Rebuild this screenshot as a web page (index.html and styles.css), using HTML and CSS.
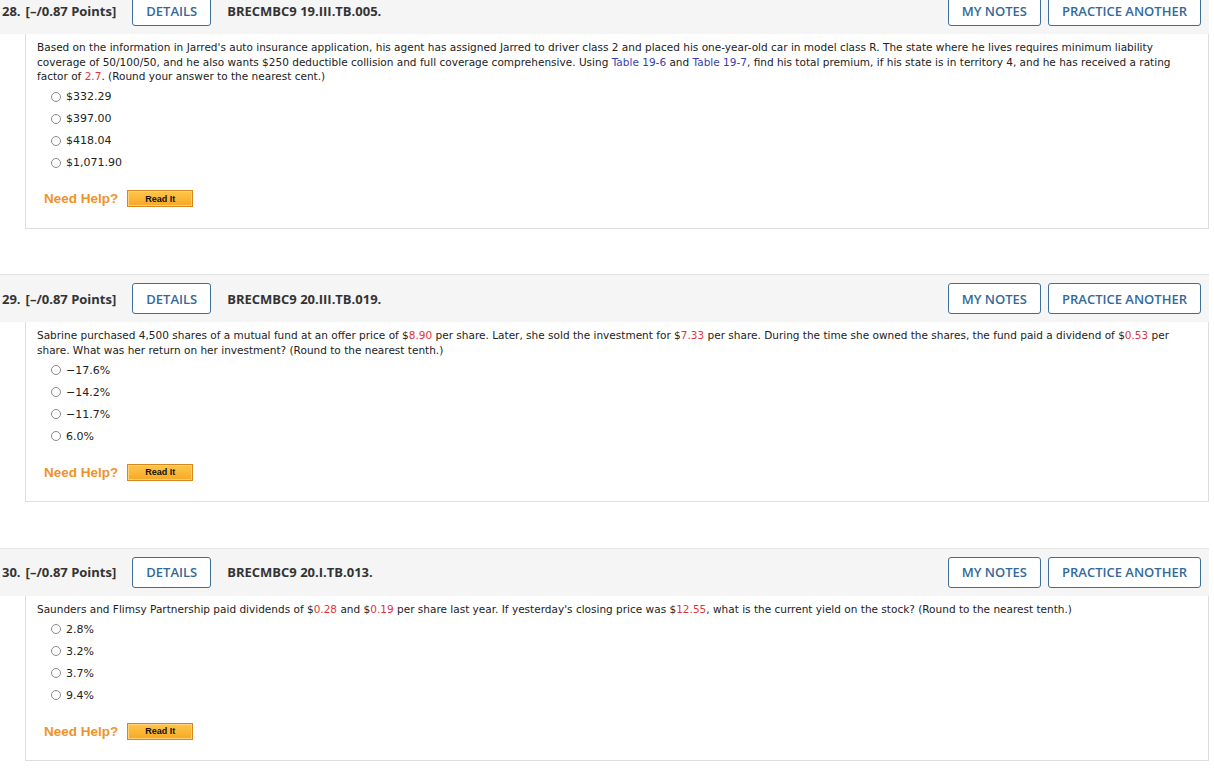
FILE: index.html
```html
<!DOCTYPE html>
<html lang="en">
<head>
<meta charset="utf-8">
<title>Questions</title>
<link rel="stylesheet" href="styles.css">
</head>
<body>
<div class="page">

  <section class="q">
    <div class="qhead">
      <span class="qnum">28.</span>
      <span class="pts">[–/0.87 Points]</span>
      <button class="btn details">DETAILS</button>
      <span class="code">BRECMBC9 19.III.TB.005.</span>
      <span class="spacer"></span>
      <button class="btn">MY NOTES</button>
      <button class="btn">PRACTICE ANOTHER</button>
    </div>
    <div class="qbody">
      <p class="stem">Based on the information in Jarred's auto insurance application, his agent has assigned Jarred to driver class 2 and placed his one-year-old car in model class R. The state where he lives requires minimum liability coverage of 50/100/50, and he also wants $250 deductible collision and full coverage comprehensive. Using <a class="link">Table 19-6</a> and <a class="link">Table 19-7</a>, find his total premium, if his state is in territory 4, and he has received a rating factor of <span class="red">2.7</span>. (Round your answer to the nearest cent.)</p>
      <ul class="opts">
        <li><span class="radio"></span>$332.29</li>
        <li><span class="radio"></span>$397.00</li>
        <li><span class="radio"></span>$418.04</li>
        <li><span class="radio"></span>$1,071.90</li>
      </ul>
      <div class="help"><span class="need">Need Help?</span><span class="readit">Read It</span></div>
    </div>
  </section>

  <section class="q">
    <div class="qhead">
      <span class="qnum">29.</span>
      <span class="pts">[–/0.87 Points]</span>
      <button class="btn details">DETAILS</button>
      <span class="code">BRECMBC9 20.III.TB.019.</span>
      <span class="spacer"></span>
      <button class="btn">MY NOTES</button>
      <button class="btn">PRACTICE ANOTHER</button>
    </div>
    <div class="qbody">
      <p class="stem">Sabrine purchased 4,500 shares of a mutual fund at an offer price of $<span class="red">8.90</span> per share. Later, she sold the investment for $<span class="red">7.33</span> per share. During the time she owned the shares, the fund paid a dividend of $<span class="red">0.53</span> per share. What was her return on her investment? (Round to the nearest tenth.)</p>
      <ul class="opts">
        <li><span class="radio"></span>−17.6%</li>
        <li><span class="radio"></span>−14.2%</li>
        <li><span class="radio"></span>−11.7%</li>
        <li><span class="radio"></span>6.0%</li>
      </ul>
      <div class="help"><span class="need">Need Help?</span><span class="readit">Read It</span></div>
    </div>
  </section>

  <section class="q">
    <div class="qhead">
      <span class="qnum">30.</span>
      <span class="pts">[–/0.87 Points]</span>
      <button class="btn details">DETAILS</button>
      <span class="code">BRECMBC9 20.I.TB.013.</span>
      <span class="spacer"></span>
      <button class="btn">MY NOTES</button>
      <button class="btn">PRACTICE ANOTHER</button>
    </div>
    <div class="qbody">
      <p class="stem">Saunders and Flimsy Partnership paid dividends of $<span class="red">0.28</span> and $<span class="red">0.19</span> per share last year. If yesterday's closing price was $<span class="red">12.55</span>, what is the current yield on the stock? (Round to the nearest tenth.)</p>
      <ul class="opts">
        <li><span class="radio"></span>2.8%</li>
        <li><span class="radio"></span>3.2%</li>
        <li><span class="radio"></span>3.7%</li>
        <li><span class="radio"></span>9.4%</li>
      </ul>
      <div class="help"><span class="need">Need Help?</span><span class="readit">Read It</span></div>
    </div>
  </section>

</div>
</body>
</html>
```

FILE: styles.css
```css
html, body {
  margin: 0;
  padding: 0;
  background: #ffffff;
}

.page {
  width: 1209px;
  margin-top: -14px;
  display: flex;
  flex-direction: column;
  gap: 45.5px;
}

.qhead {
  height: 48px;
  box-sizing: border-box;
  background: #f5f5f5;
  border-top: 1px solid #e4e4e4;
  display: flex;
  align-items: center;
  padding: 0 8px 0 2px;
  font-family: "Open Sans", "Liberation Sans", sans-serif;
  font-size: 13px;
  font-weight: 700;
  color: #333333;
}

.qnum { margin-right: 5px; }

.pts { margin-right: 16px; }

.code { margin-left: 16px; }

.spacer { flex: 1; }

.btn {
  height: 31px;
  box-sizing: border-box;
  padding: 0 13px;
  background: #ffffff;
  border: 1px solid #3d6f97;
  border-radius: 3px;
  font-family: "Open Sans", "Liberation Sans", sans-serif;
  font-size: 13px;
  font-weight: 600;
  color: #33699a;
  margin-left: 7px;
}

.btn.details { margin-left: 0; }

.qbody {
  margin-left: 25px;
  border: 1px solid #dddddd;
  border-top: none;
  padding: 6px 14px 19px 11px;
  font-family: "DejaVu Sans", Verdana, sans-serif;
  font-size: 10.53px;
  color: #222222;
}

.stem {
  margin: 0;
  line-height: 14.5px;
}

.red { color: #e0343a; }

.link { color: #3a3fb0; }

.opts {
  list-style: none;
  margin: 2px 0 0;
  padding: 0;
  font-size: 11px;
}

.opts li {
  height: 22px;
  display: flex;
  align-items: center;
  padding-left: 14px;
}

.radio {
  width: 10px;
  height: 10px;
  box-sizing: border-box;
  border: 1px solid #8a8a8a;
  border-radius: 50%;
  background: #ffffff;
  margin-right: 5px;
}

.help {
  margin-top: 15px;
  height: 20px;
  display: flex;
  align-items: center;
  padding-left: 7px;
}

.need {
  font-family: "Liberation Sans", Arial, sans-serif;
  font-weight: 700;
  font-size: 13.5px;
  color: #f0922a;
}

.readit {
  margin-left: 9px;
  width: 66px;
  height: 17px;
  box-sizing: border-box;
  display: flex;
  align-items: center;
  justify-content: center;
  border: 1px solid #d9861c;
  box-shadow: inset 0 0 0 1px #ffd27a;
  background: linear-gradient(#ffc64a, #f7a825);
  font-family: "Liberation Sans", Arial, sans-serif;
  font-weight: 700;
  font-size: 9px;
  color: #111111;
}
```
